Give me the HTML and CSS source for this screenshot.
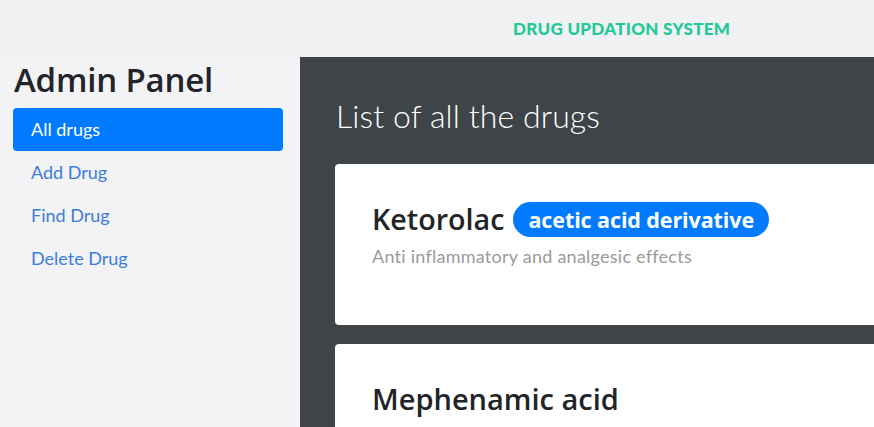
FILE: index.html
```html
<!DOCTYPE html>
<html lang="en">
<head>
<meta charset="utf-8">
<title>Drug Updation System</title>
<link rel="stylesheet" href="styles.css">
</head>
<body>
<header class="topbar">
  <span class="brand">DRUG UPDATION SYSTEM</span>
</header>
<div class="layout">
  <aside class="sidebar">
    <h1 class="panel-title">Admin Panel</h1>
    <nav class="nav">
      <a class="nav-link active" href="#">All drugs</a>
      <a class="nav-link" href="#">Add Drug</a>
      <a class="nav-link" href="#">Find Drug</a>
      <a class="nav-link" href="#">Delete Drug</a>
    </nav>
  </aside>
  <main class="content">
    <h2 class="page-title">List of all the drugs</h2>
    <div class="card">
      <h3 class="drug-name">Ketorolac <span class="badge">acetic acid derivative</span></h3>
      <p class="drug-desc">Anti inflammatory and analgesic effects</p>
    </div>
    <div class="card">
      <h3 class="drug-name big">Mephenamic acid</h3>
    </div>
  </main>
</div>
</body>
</html>
```

FILE: styles.css
```css
html, body {
  margin: 0;
  padding: 0;
  height: 100%;
  overflow: hidden;
}
body {
  font-family: "Open Sans", "Noto Sans", sans-serif;
  color: #212529;
  background: #3e4447;
}
.topbar {
  height: 57px;
  background: #f0f1f3;
  display: flex;
  align-items: center;
  padding-left: 513px;
  box-sizing: border-box;
}
.brand {
  font-family: "Lato", sans-serif;
  font-weight: 900;
  font-size: 17px;
  color: #20c997;
  letter-spacing: 0.3px;
  margin-top: -1px;
}
.layout {
  display: grid;
  grid-template-columns: 300px 1fr;
  height: calc(100% - 57px);
}
.sidebar {
  background: #f3f3f5;
  padding: 0 17px 0 13px;
}
.panel-title {
  margin: -2px 0 0 1px;
  font-size: 33px;
  font-weight: 600;
  line-height: 50px;
  letter-spacing: -0.2px;
  color: #212529;
}
.nav {
  display: flex;
  flex-direction: column;
  margin-top: 3px;
}
.nav-link {
  font-family: "Lato", sans-serif;
  font-size: 18px;
  line-height: 23px;
  padding: 10px 18px;
  color: #3b7ddd;
  text-decoration: none;
  border-radius: 4px;
}
.nav-link.active {
  background: #007bff;
  color: #fff;
}
.content {
  padding: 0 0 0 35px;
  overflow: hidden;
}
.page-title {
  font-family: "Lato", sans-serif;
  font-weight: 300;
  font-size: 32px;
  line-height: 40px;
  letter-spacing: 0.1px;
  color: #fff;
  margin: 39px 0 0 1px;
}
.card {
  background: #fff;
  border-radius: 4px;
  margin: 28px -10px 0 0;
  padding: 35px 37px;
  height: 161px;
  box-sizing: border-box;
}
.card + .card {
  margin-top: 19px;
}
.drug-name {
  margin: 0;
  font-size: 28.7px;
  font-weight: 600;
  line-height: 40px;
  display: flex;
  align-items: center;
  gap: 9px;
}
.drug-name.big {
  font-size: 29px;
}
.badge {
  background: #007bff;
  color: #fff;
  font-size: 21.5px;
  font-weight: 700;
  line-height: 25px;
  padding: 5px 15px;
  border-radius: 20px;
  letter-spacing: -0.1px;
}
.drug-desc {
  font-family: "Lato", sans-serif;
  font-weight: 400;
  font-size: 18px;
  letter-spacing: 0.25px;
  color: #9a9a9a;
  margin: 6px 0 0;
}
```
